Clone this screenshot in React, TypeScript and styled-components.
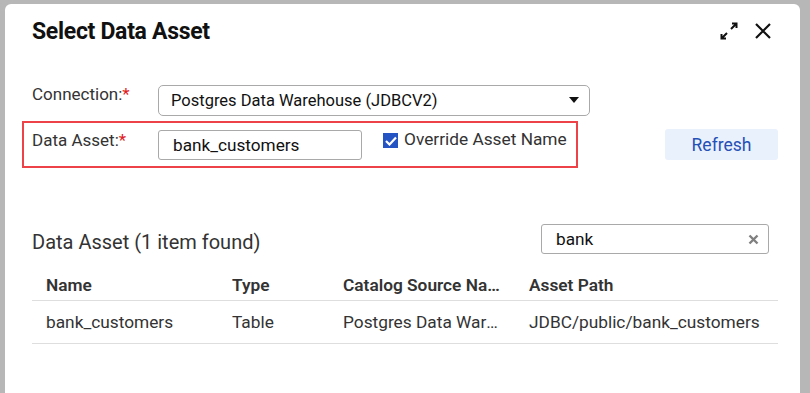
import styled, { createGlobalStyle } from "styled-components"

const GlobalStyle = createGlobalStyle`
  html, body {
    margin: 0;
    padding: 0;
    background: #b7b7b7;
    font-family: Roboto, "Liberation Sans", sans-serif;
  }
`

const Backdrop = styled.div`
  width: 810px;
  height: 393px;
  padding: 4px 10px 0 5px;
  box-sizing: border-box;
  overflow: hidden;
`

const Dialog = styled.div`
  background: #fff;
  border-radius: 6px 6px 0 0;
  height: 100%;
  padding: 0 22px 0 27px;
  box-sizing: border-box;
`

const Header = styled.div`
  display: flex;
  align-items: center;
  justify-content: space-between;
  height: 54px;
`

const Title = styled.h1`
  margin: 0;
  font-size: 23px;
  font-weight: 700;
  color: #111;
  letter-spacing: -0.3px;
`

const HeaderIcons = styled.div`
  display: flex;
  align-items: center;
  gap: 15px;
  margin-right: 6px;
`

const FormRow = styled.div`
  display: flex;
  align-items: center;
  height: 32px;
`

const Label = styled.label<{ $offset?: number }>`
  width: 126px;
  font-size: 17px;
  color: #333;
  align-self: flex-start;
  padding-top: ${(p) => p.$offset ?? 2}px;
`

const Req = styled.span`
  color: #e02020;
`

const Select = styled.div`
  width: 432px;
  height: 31px;
  border: 1px solid #a9a9a9;
  border-radius: 5px;
  box-sizing: border-box;
  display: flex;
  align-items: center;
  justify-content: space-between;
  padding: 0 10px 0 12px;
  font-size: 16.5px;
  color: #111;
`

const Caret = styled.span`
  width: 0;
  height: 0;
  border-left: 5px solid transparent;
  border-right: 5px solid transparent;
  border-top: 6px solid #111;
`

const AssetRow = styled.div`
  display: flex;
  align-items: center;
  margin-top: 5px;
`

const Highlight = styled.div`
  display: flex;
  align-items: center;
  width: 556px;
  height: 47px;
  border: 2px solid #ee4249;
  box-sizing: border-box;
  margin-left: -10px;
  padding-left: 8px;
`

const TextInput = styled.div<{ $width: number }>`
  width: ${(p) => p.$width}px;
  height: 30px;
  border: 1px solid #a9a9a9;
  border-radius: 3px;
  box-sizing: border-box;
  display: flex;
  align-items: center;
  justify-content: space-between;
  padding: 0 9px 0 14px;
  font-size: 17.2px;
  color: #111;
`

const Check = styled.span`
  width: 15px;
  height: 15px;
  background: #2453c4;
  display: inline-flex;
  align-items: center;
  justify-content: center;
  margin: 0 6px 0 21px;
  align-self: flex-start;
  margin-top: 10px;
`

const CheckLabel = styled.span`
  font-size: 17.3px;
  color: #333;
  align-self: flex-start;
  margin-top: 6px;
`

const RefreshButton = styled.button`
  margin-left: 87px;
  width: 113px;
  height: 31px;
  border: none;
  border-radius: 3px;
  background: #e9f1fc;
  color: #2550b6;
  font-family: inherit;
  font-size: 17.5px;
`

const ListHeader = styled.div`
  display: flex;
  align-items: center;
  justify-content: space-between;
  margin-top: 56px;
  padding-right: 9px;
`

const ListTitle = styled.div`
  font-size: 20px;
  color: #333;
  padding-top: 6px;
`

const Table = styled.div`
  margin-top: 16px;
`

const TRow = styled.div<{ $head?: boolean }>`
  display: grid;
  grid-template-columns: 186px 111px 186px 1fr;
  padding-left: 14px;
  height: ${(p) => (p.$head ? 30 : 42)}px;
  align-items: center;
  border-bottom: 1px solid #dedede;
  font-size: 17.3px;
  font-weight: ${(p) => (p.$head ? 600 : 400)};
  color: #333;
`

const Cell = styled.div`
  white-space: nowrap;
  overflow: hidden;
  text-overflow: ellipsis;
  padding-right: 26px;

  &:last-child {
    padding-right: 0;
  }
`

export default function App() {
  return (
    <>
      <GlobalStyle />
      <Backdrop>
        <Dialog>
          <Header>
            <Title>Select Data Asset</Title>
            <HeaderIcons>
              <svg width="20" height="20" viewBox="0 0 20 20" fill="none" stroke="#111" strokeWidth="2">
                <path d="M12 8 L17.5 2.5 M13 2.5 H17.5 V7 M8 12 L2.5 17.5 M2.5 13 V17.5 H7" />
              </svg>
              <svg width="18" height="18" viewBox="0 0 18 18" fill="none" stroke="#111" strokeWidth="2.2">
                <path d="M2 2 L16 16 M16 2 L2 16" />
              </svg>
            </HeaderIcons>
          </Header>

          <FormRow style={{ marginTop: 26 }}>
            <Label $offset={0}>
              Connection:<Req>*</Req>
            </Label>
            <Select>
              Postgres Data Warehouse (JDBCV2)
              <Caret />
            </Select>
          </FormRow>

          <AssetRow>
            <Highlight>
              <Label $offset={7}>
                Data Asset:<Req>*</Req>
              </Label>
              <TextInput $width={204}>bank_customers</TextInput>
              <Check>
                <svg width="12" height="10" viewBox="0 0 12 10" fill="none" stroke="#fff" strokeWidth="2.2">
                  <path d="M1 5 L4.5 8.5 L11 1.5" />
                </svg>
              </Check>
              <CheckLabel>Override Asset Name</CheckLabel>
            </Highlight>
            <RefreshButton>Refresh</RefreshButton>
          </AssetRow>

          <ListHeader>
            <ListTitle>Data Asset (1 item found)</ListTitle>
            <TextInput $width={228}>
              bank
              <svg width="11" height="11" viewBox="0 0 11 11" fill="none" stroke="#808080" strokeWidth="2.4">
                <path d="M1.5 1.5 L9.5 9.5 M9.5 1.5 L1.5 9.5" />
              </svg>
            </TextInput>
          </ListHeader>

          <Table>
            <TRow $head>
              <Cell>Name</Cell>
              <Cell>Type</Cell>
              <Cell>Catalog Source Name</Cell>
              <Cell>Asset Path</Cell>
            </TRow>
            <TRow>
              <Cell>bank_customers</Cell>
              <Cell>Table</Cell>
              <Cell>Postgres Data Warehouse</Cell>
              <Cell>JDBC/public/bank_customers</Cell>
            </TRow>
          </Table>
        </Dialog>
      </Backdrop>
    </>
  )
}
